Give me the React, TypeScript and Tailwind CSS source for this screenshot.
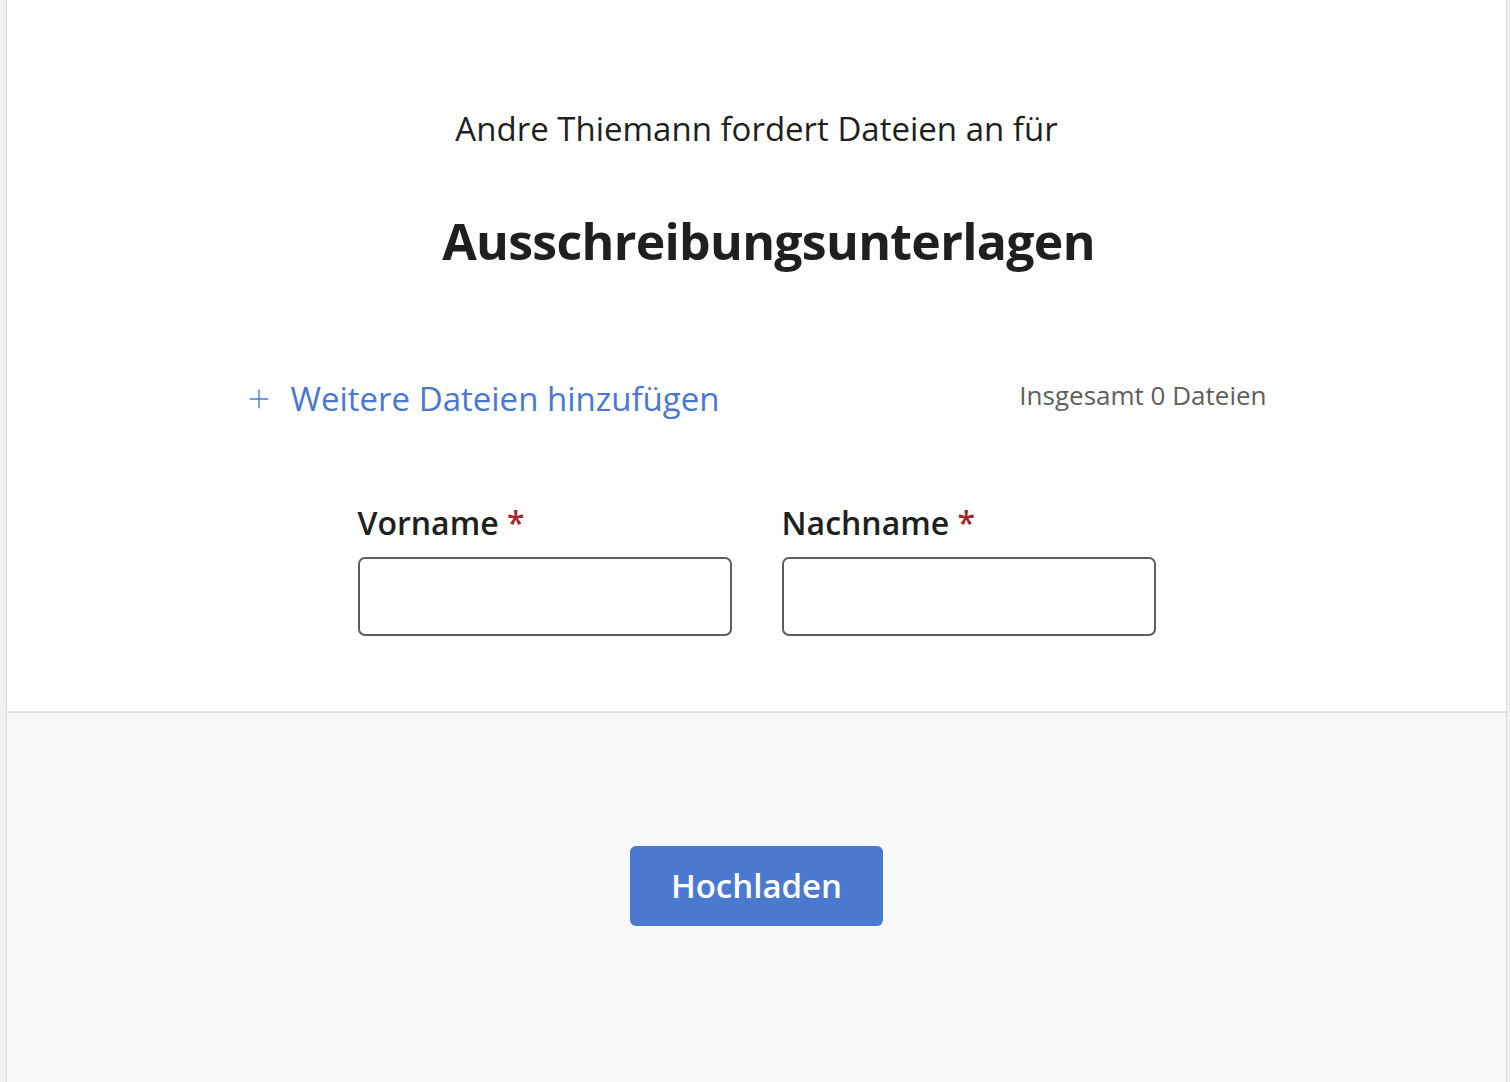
import { Plus } from "lucide-react";

const font = { fontFamily: '"Open Sans", "Noto Sans", sans-serif' };

const Field = ({ label }: { label: string }) => (
  <div className="flex w-[374px] flex-col">
    <label className="mb-[14px] text-[32px] font-semibold leading-[40px] text-[#201f1e]">
      {label} <span className="text-[#a4262c]">*</span>
    </label>
    <input
      type="text"
      className="h-[79px] w-full rounded-[7px] border-2 border-[#605e5c] bg-white px-3 outline-none"
    />
  </div>
);

export default function App() {
  return (
    <div
      className="flex min-h-screen bg-[#f0f0f0] pl-[6px] pr-[3px] text-[#201f1e]"
      style={font}
    >
      <div className="flex min-h-screen flex-1 flex-col border-x border-[#dcdcdc]">
        <div className="flex flex-col items-center bg-white pb-[75px] pt-[105px]">
          <p className="text-[33px] leading-[48px]">
            Andre Thiemann fordert Dateien an für
          </p>
          <h1 className="ml-[24px] mt-[56px] text-[50px] font-bold leading-[64px] tracking-[-0.7px]">
            Ausschreibungsunterlagen
          </h1>

          <div className="mt-[104px] flex w-[1020px] items-center justify-between">
            <button className="-ml-[3px] flex items-center gap-[17px] text-[#4a78cf]">
              <Plus size={30} strokeWidth={1.1} />
              <span className="text-[33px] leading-[44px]">
                Weitere Dateien hinzufügen
              </span>
            </button>
            <span className="-mt-2 text-[26px] text-[#605e5c]">
              Insgesamt 0 Dateien
            </span>
          </div>

          <div className="mt-[82px] flex gap-[50px]">
            <Field label="Vorname" />
            <Field label="Nachname" />
          </div>
        </div>

        <div className="flex flex-1 justify-center border-t-2 border-[#e1e1e1] bg-[#f8f8f8] pt-[133px]">
          <button className="h-[80px] w-[253px] rounded-[6px] bg-[#4a79cf] text-[33px] font-semibold text-white">
            Hochladen
          </button>
        </div>
      </div>
    </div>
  );
}
